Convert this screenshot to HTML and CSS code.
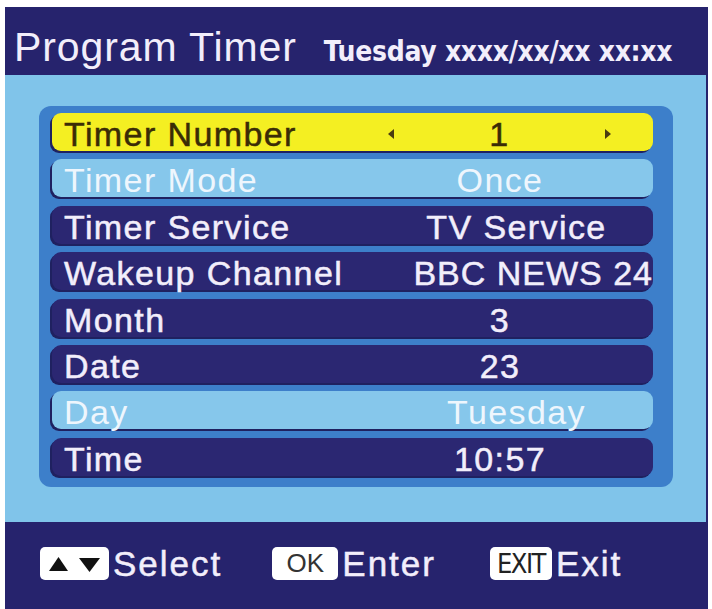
FILE: index.html
```html
<!DOCTYPE html>
<html>
<head>
<meta charset="utf-8">
<link rel="stylesheet" href="styles.css">
</head>
<body>
<div class="screen">
  <div class="header">
    <span class="title">Program Timer</span>
    <span class="subtitle">Tuesday xxxx/xx/xx xx:xx</span>
  </div>
  <div class="panel">
    <div class="list">
      <div class="row focus">
        <span class="label">Timer Number</span>
        <span class="value spin"><i class="arr left"></i><span>1</span><i class="arr right"></i></span>
      </div>
      <div class="row light">
        <span class="label">Timer Mode</span>
        <span class="value">Once</span>
      </div>
      <div class="row">
        <span class="label">Timer Service</span>
        <span class="value shift">TV Service</span>
      </div>
      <div class="row">
        <span class="label">Wakeup Channel</span>
        <span class="value wide">BBC NEWS 24</span>
      </div>
      <div class="row">
        <span class="label">Month</span>
        <span class="value">3</span>
      </div>
      <div class="row">
        <span class="label">Date</span>
        <span class="value">23</span>
      </div>
      <div class="row light">
        <span class="label">Day</span>
        <span class="value shift">Tuesday</span>
      </div>
      <div class="row">
        <span class="label">Time</span>
        <span class="value">10:57</span>
      </div>
    </div>
  </div>
  <div class="footer">
    <div class="hint">
      <span class="key key-arrows">
        <svg width="52" height="18" viewBox="0 0 52 18"><polygon points="0,16 9.5,2 19,16" fill="#111"/><polygon points="30,3 51,3 40.5,17" fill="#111"/></svg>
      </span>
      <span class="hint-text">Select</span>
    </div>
    <div class="hint">
      <span class="key key-ok">OK</span>
      <span class="hint-text">Enter</span>
    </div>
    <div class="hint">
      <span class="key key-exit">EXIT</span>
      <span class="hint-text">Exit</span>
    </div>
  </div>
</div>
</body>
</html>
```

FILE: styles.css
```css
html, body {
  margin: 0;
  padding: 0;
  background: #ffffff;
}
body {
  font-family: "Liberation Sans", Arial, sans-serif;
}
.screen {
  margin: 7px 0 0 5px;
  width: 703px;
  height: 602px;
  background: #26236d;
  display: flex;
  flex-direction: column;
  color: #f2eefb;
}
.header {
  height: 68px;
  box-sizing: border-box;
  padding: 20px 0 0 9px;
  display: flex;
  align-items: baseline;
  gap: 27px;
  white-space: nowrap;
}
.title {
  font-size: 41px;
  line-height: 41px;
  letter-spacing: 0.9px;
}
.subtitle {
  font-family: "DejaVu Sans Condensed", "DejaVu Sans", sans-serif;
  font-stretch: condensed;
  font-weight: bold;
  font-size: 28px;
  letter-spacing: -0.3px;
}
.panel {
  height: 447px;
  width: 701px;
  background: #80c4ea;
  box-sizing: border-box;
  padding: 31px 0 0 34px;
}
.list {
  width: 634px;
  height: 381px;
  box-sizing: border-box;
  background: #3d7fca;
  border-radius: 12px;
  padding: 7px 20px 0 13px;
  display: flex;
  flex-direction: column;
  gap: 8.4px;
}
.row {
  height: 38px;
  border-radius: 9px;
  background: #2b2772;
  box-shadow: -2px 2px 0 #1f2160;
  display: grid;
  grid-template-columns: 300px 1fr;
  align-items: center;
  font-size: 34px;
  line-height: 38px;
  letter-spacing: 1.4px;
  -webkit-text-stroke: 0.5px currentColor;
  white-space: nowrap;
  padding-top: 2px;
  box-sizing: border-box;
}
.row.focus {
  background: #f4ef22;
  color: #3a2c06;
}
.row.light {
  background: #86c7eb;
  color: #eef6fd;
  -webkit-text-stroke: 0;
}
.label {
  padding-left: 12px;
}
.value {
  text-align: center;
  padding-right: 5px;
}
.value.shift {
  padding-left: 28px;
  padding-right: 0;
}
.value.wide {
  text-align: right;
  padding-right: 0;
  letter-spacing: 1px;
}
.value.spin {
  display: flex;
  justify-content: space-between;
  align-items: center;
  padding: 0 42px 0 36px;
}
.arr {
  width: 0;
  height: 0;
  border-top: 5px solid transparent;
  border-bottom: 5px solid transparent;
}
.arr.left {
  border-right: 6px solid #4a3c10;
}
.arr.right {
  border-left: 6px solid #4a3c10;
}
.footer {
  flex: 1;
  display: flex;
  align-items: center;
  padding-left: 35px;
  padding-bottom: 4px;
}
.hint {
  display: flex;
  align-items: center;
  gap: 4px;
}
.hint + .hint {
  margin-left: 50px;
}
.hint + .hint + .hint {
  margin-left: 54px;
}
.hint-text {
  font-size: 35px;
  letter-spacing: 2px;
  line-height: 36px;
  -webkit-text-stroke: 0.5px currentColor;
}
.key {
  background: #ffffff;
  border-radius: 5px;
  height: 33px;
  display: flex;
  align-items: center;
  justify-content: center;
  box-sizing: border-box;
}
.key-arrows {
  width: 69px;
}
.key-ok {
  width: 66px;
  color: #333333;
  font-size: 26px;
}
.key-exit {
  width: 62px;
  color: #222222;
  font-family: "DejaVu Sans Condensed", "DejaVu Sans", sans-serif;
  font-stretch: condensed;
  font-size: 27px;
  letter-spacing: -1.5px;
}
```
